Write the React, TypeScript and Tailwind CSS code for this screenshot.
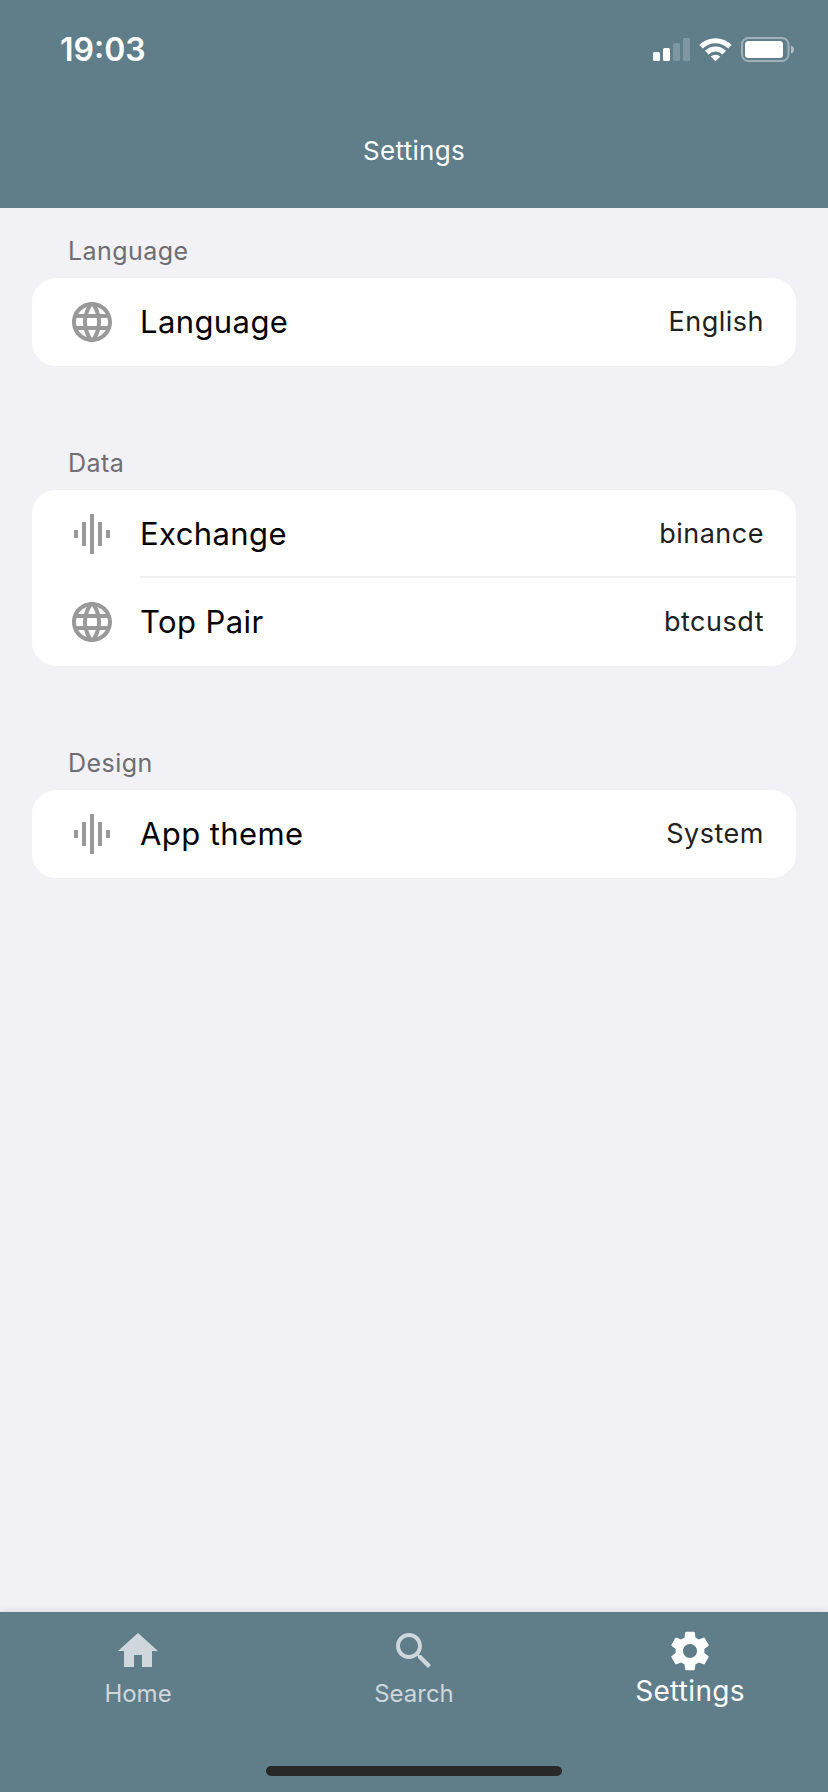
import type { ReactNode } from "react";

type IconName = "globe" | "wave" | "home" | "search" | "settings";

const iconPaths: Record<IconName, string> = {
  globe:
    "M11.99 2C6.47 2 2 6.48 2 12s4.47 10 9.99 10C17.52 22 22 17.52 22 12S17.52 2 11.99 2zm6.93 6h-2.95c-.32-1.25-.78-2.45-1.38-3.56 1.84.63 3.37 1.91 4.33 3.56zM12 4.04c.83 1.2 1.48 2.53 1.91 3.96h-3.82c.43-1.43 1.08-2.76 1.91-3.96zM4.26 14C4.1 13.36 4 12.69 4 12s.1-1.36.26-2h3.38c-.08.66-.14 1.32-.14 2s.06 1.34.14 2H4.26zm.82 2h2.95c.32 1.25.78 2.45 1.38 3.56-1.84-.63-3.37-1.9-4.33-3.56zm2.95-8H5.08c.96-1.66 2.49-2.93 4.33-3.56C8.81 5.55 8.35 6.75 8.03 8zM12 19.96c-.83-1.2-1.48-2.53-1.91-3.96h3.82c-.43 1.43-1.08 2.76-1.91 3.96zM14.34 14H9.66c-.09-.66-.16-1.32-.16-2s.07-1.35.16-2h4.68c.09.65.16 1.32.16 2s-.07 1.34-.16 2zm.25 5.56c.6-1.11 1.06-2.31 1.38-3.56h2.95c-.96 1.65-2.49 2.93-4.33 3.56zM16.36 14c.08-.66.14-1.32.14-2s-.06-1.34-.14-2h3.38c.16.64.26 1.31.26 2s-.1 1.36-.26 2h-3.38z",
  wave: "M7 18h2V6H7v12zm4 4h2V2h-2v20zm-8-8h2v-4H3v4zm12 4h2V6h-2v12zm4-8v4h2v-4h-2z",
  home: "M10 20v-6h4v6h5v-8h3L12 3 2 12h3v8z",
  search:
    "M15.5 14h-.79l-.28-.27C15.41 12.59 16 11.11 16 9.5 16 5.91 13.09 3 9.5 3S3 5.91 3 9.5 5.91 16 9.5 16c1.61 0 3.09-.59 4.23-1.57l.27.28v.79l5 4.99L20.49 19l-4.99-5zm-6 0C7.01 14 5 11.99 5 9.5S7.01 5 9.5 5 14 7.01 14 9.5 11.99 14 9.5 14z",
  settings:
    "M19.14 12.94c.04-.3.06-.61.06-.94 0-.32-.02-.64-.07-.94l2.03-1.58c.18-.14.23-.41.12-.61l-1.92-3.32c-.12-.22-.37-.29-.59-.22l-2.39.96c-.5-.38-1.03-.7-1.62-.94l-.36-2.54c-.04-.24-.24-.41-.48-.41h-3.84c-.24 0-.43.17-.47.41l-.36 2.54c-.59.24-1.13.57-1.62.94l-2.39-.96c-.22-.08-.47 0-.59.22L2.74 8.87c-.12.21-.08.47.12.61l2.03 1.58c-.05.3-.09.63-.09.94s.02.64.07.94l-2.03 1.58c-.18.14-.23.41-.12.61l1.92 3.32c.12.22.37.29.59.22l2.39-.96c.5.38 1.03.7 1.62.94l.36 2.54c.05.24.24.41.48.41h3.84c.24 0 .44-.17.47-.41l.36-2.54c.59-.24 1.13-.56 1.62-.94l2.39.96c.22.08.47 0 .59-.22l1.92-3.32c.12-.22.07-.47-.12-.61l-2.01-1.58zM12 15.5c-1.93 0-3.5-1.57-3.5-3.5s1.57-3.5 3.5-3.5 3.5 1.57 3.5 3.5-1.57 3.5-3.5 3.5z",
};

function Icon({ name }: { name: IconName }) {
  return (
    <svg viewBox="0 0 24 24" className="size-12 shrink-0 fill-current">
      <path d={iconPaths[name]} />
    </svg>
  );
}

function StatusBar() {
  return (
    <div className="flex h-[100px] items-center justify-between pr-[33px] pl-[60px]">
      <span className="text-[32px] leading-10 font-semibold">19:03</span>
      <svg width="142" height="26" viewBox="0 0 142 26" fill="white">
        <rect x="0" y="15" width="7" height="9" rx="1.6" />
        <rect x="10" y="11" width="7" height="13" rx="1.6" />
        <rect x="20" y="6" width="7" height="18" rx="1.6" opacity="0.2" />
        <rect x="30" y="1" width="7" height="23" rx="1.6" opacity="0.2" />
        <path d="M46.3 7.9a23 23 0 0 1 32.4 0l-3.4 3.7a18.2 18.2 0 0 0-25.6 0z" />
        <path d="M52 13.8a15 15 0 0 1 21 0l-3.5 3.6a10 10 0 0 0-14 0z" />
        <path d="M57.7 19.6a7 7 0 0 1 9.6 0l-4.8 4.6z" />
        <rect x="89" y="1" width="46.5" height="23" rx="6.5" fill="none" stroke="white" strokeWidth="2" opacity="0.4" />
        <rect x="92" y="4" width="38" height="17" rx="3.5" />
        <path d="M138 8.5q3 1 3 4t-3 4z" opacity="0.5" />
      </svg>
    </div>
  );
}

function Section({ title, children }: { title: string; children: ReactNode }) {
  return (
    <section>
      <h2 className="pl-[68px] text-[25px] leading-[30px] tracking-[0.45px] text-[#6d6d72]">{title}</h2>
      <div className="mx-8 mt-3 overflow-hidden rounded-3xl bg-white">{children}</div>
    </section>
  );
}

interface RowProps {
  icon: IconName;
  label: string;
  value: string;
  divider?: boolean;
}

function Row({ icon, label, value, divider }: RowProps) {
  return (
    <div className="flex h-[88px] items-center pl-9 text-[#999999]">
      <Icon name={icon} />
      <div
        className={
          "ml-6 flex h-full flex-1 items-center justify-between pr-8 " +
          (divider ? "border-b-2 border-[#f0f0f1] pt-0.5" : "")
        }
      >
        <span className="text-[31px] leading-10 tracking-[0.4px] text-black">{label}</span>
        <span className="text-[27px] leading-10 tracking-[0.5px] text-[#212121]">{value}</span>
      </div>
    </div>
  );
}

function Tab({ icon, label, active }: { icon: IconName; label: string; active?: boolean }) {
  return (
    <button className={"flex flex-1 flex-col items-center pt-[15px] " + (active ? "text-white" : "text-[#cfd6dc]")}>
      <Icon name={icon} />
      <span className={active ? "text-[28px] leading-8 tracking-[0.3px]" : "mt-[3px] text-[24px] leading-8"}>
        {label}
      </span>
    </button>
  );
}

export default function App() {
  return (
    <div className="flex h-[1792px] w-[828px] flex-col bg-[#f1f1f6] font-['Inter',sans-serif]">
      <header className="h-[208px] bg-[#607d8a] text-white">
        <StatusBar />
        <h1 className="pt-[35px] text-center text-[26px] leading-8 tracking-[0.3px]">Settings</h1>
      </header>
      <main className="flex flex-1 flex-col gap-[82px] pt-7">
        <Section title="Language">
          <Row icon="globe" label="Language" value="English" />
        </Section>
        <Section title="Data">
          <Row icon="wave" label="Exchange" value="binance" divider />
          <Row icon="globe" label="Top Pair" value="btcusdt" />
        </Section>
        <Section title="Design">
          <Row icon="wave" label="App theme" value="System" />
        </Section>
      </main>
      <nav className="flex h-[180px] flex-col justify-between bg-[#607d8a] pb-4 shadow-[0_0_8px_rgba(0,0,0,0.12)]">
        <div className="flex">
          <Tab icon="home" label="Home" />
          <Tab icon="search" label="Search" />
          <Tab icon="settings" label="Settings" active />
        </div>
        <div className="h-2.5 w-[296px] self-center rounded-full bg-[#282828]" />
      </nav>
    </div>
  );
}
